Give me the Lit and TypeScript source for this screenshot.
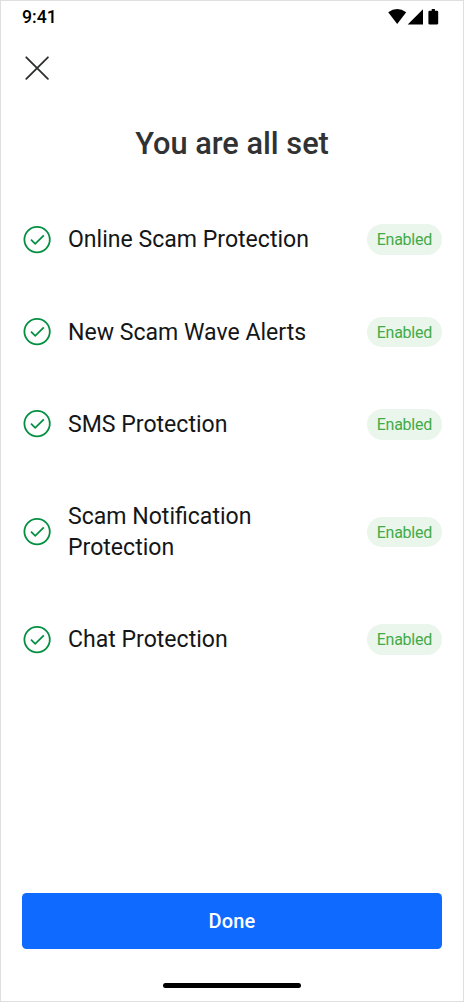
import { LitElement, html, css } from "lit";
import { customElement } from "lit/decorators.js";

@customElement("app-root")
export class AppRoot extends LitElement {
  static styles = css`
    :host { display: flex; flex-direction: column; box-sizing: border-box; width: 464px; height: 1002px; border: 1px solid #dfdfdf; background: #fff; font-family: Roboto, sans-serif; color: #141618; overflow: hidden; }
    .status { display: flex; justify-content: space-between; height: 32px; padding: 0 24px 0 21px; box-sizing: border-box; }
    .time { font-size: 17.7px; font-weight: 500; line-height: 32px; color: #000; }
    .signals { margin-top: 7px; fill: #000; }
    .close { display: block; width: 24px; height: 24px; padding: 0; border: 0; background: none; margin: 23px 0 0 24px; }
    .close svg, .check, .signals { display: block; }
    h1 { margin: 44px 0 0; height: 40px; line-height: 40px; font-size: 30.75px; font-weight: 500; text-align: center; color: #303233; }
    .list { display: flex; flex-direction: column; gap: 61.2px; margin: 60.4px 21px 0 22px; }
    .row { display: flex; align-items: center; }
    .check { margin-right: 17px; }
    .label { flex: 1; font-size: 23.07px; line-height: 31px; max-width: 250px; }
    .badge { margin-left: auto; width: 75.3px; height: 30.8px; border-radius: 16px; background: #eaf6eb; color: #42ab48; font-size: 16px; letter-spacing: -0.25px; line-height: 31px; text-align: center; }
    .done { margin: auto 21px 0; height: 56.3px; padding: 0 0 0.5px; border: 0; border-radius: 4.5px; background: #0f6bff; color: #fff; font: 500 20px Roboto, sans-serif; letter-spacing: 0.2px; }
    .home { width: 138px; height: 5px; border-radius: 3px; background: #000; margin: 33.7px auto 13px; }
  `;
  render() {
    const items = ["Online Scam Protection", "New Scam Wave Alerts", "SMS Protection", "Scam Notification Protection", "Chat Protection"];
    return html`
      <div class="status"><span class="time">9:41</span>
        <svg class="signals" width="51" height="18" viewBox="0 0 51 18"><path d="M0.2 4.2Q9.2-2.2 18.2 4.2L9.2 16ZM19.7 16.6L35 1.2V16.6Z"/><path d="M43.7 1h3.2v1.7h2q1.3 0 1.3 1.3v11.3q0 1.3-1.3 1.3h-7.2q-1.3 0-1.3-1.3V4q0-1.3 1.3-1.3h2z"/></svg>
      </div>
      <button class="close" aria-label="Close"><svg width="24" height="24"><path d="M1.3 1.3L22.9 22.9M22.9 1.3L1.3 22.9" stroke="#2b2d2e" stroke-width="1.8" stroke-linecap="round"/></svg></button>
      <h1>You are all set</h1>
      <div class="list">${items.map((t) => html`<div class="row">
        <svg class="check" width="28" height="28" fill="none" stroke="#048f42" stroke-width="1.8" viewBox="0 0.4 28 28"><circle cx="14.1" cy="14" r="12.7"/><path d="M8 14.1L12.2 18.2L20.8 9.7"/></svg>
        <span class="label">${t}</span><span class="badge">Enabled</span></div>`)}</div>
      <button class="done">Done</button>
      <div class="home"></div>`;
  }
}
